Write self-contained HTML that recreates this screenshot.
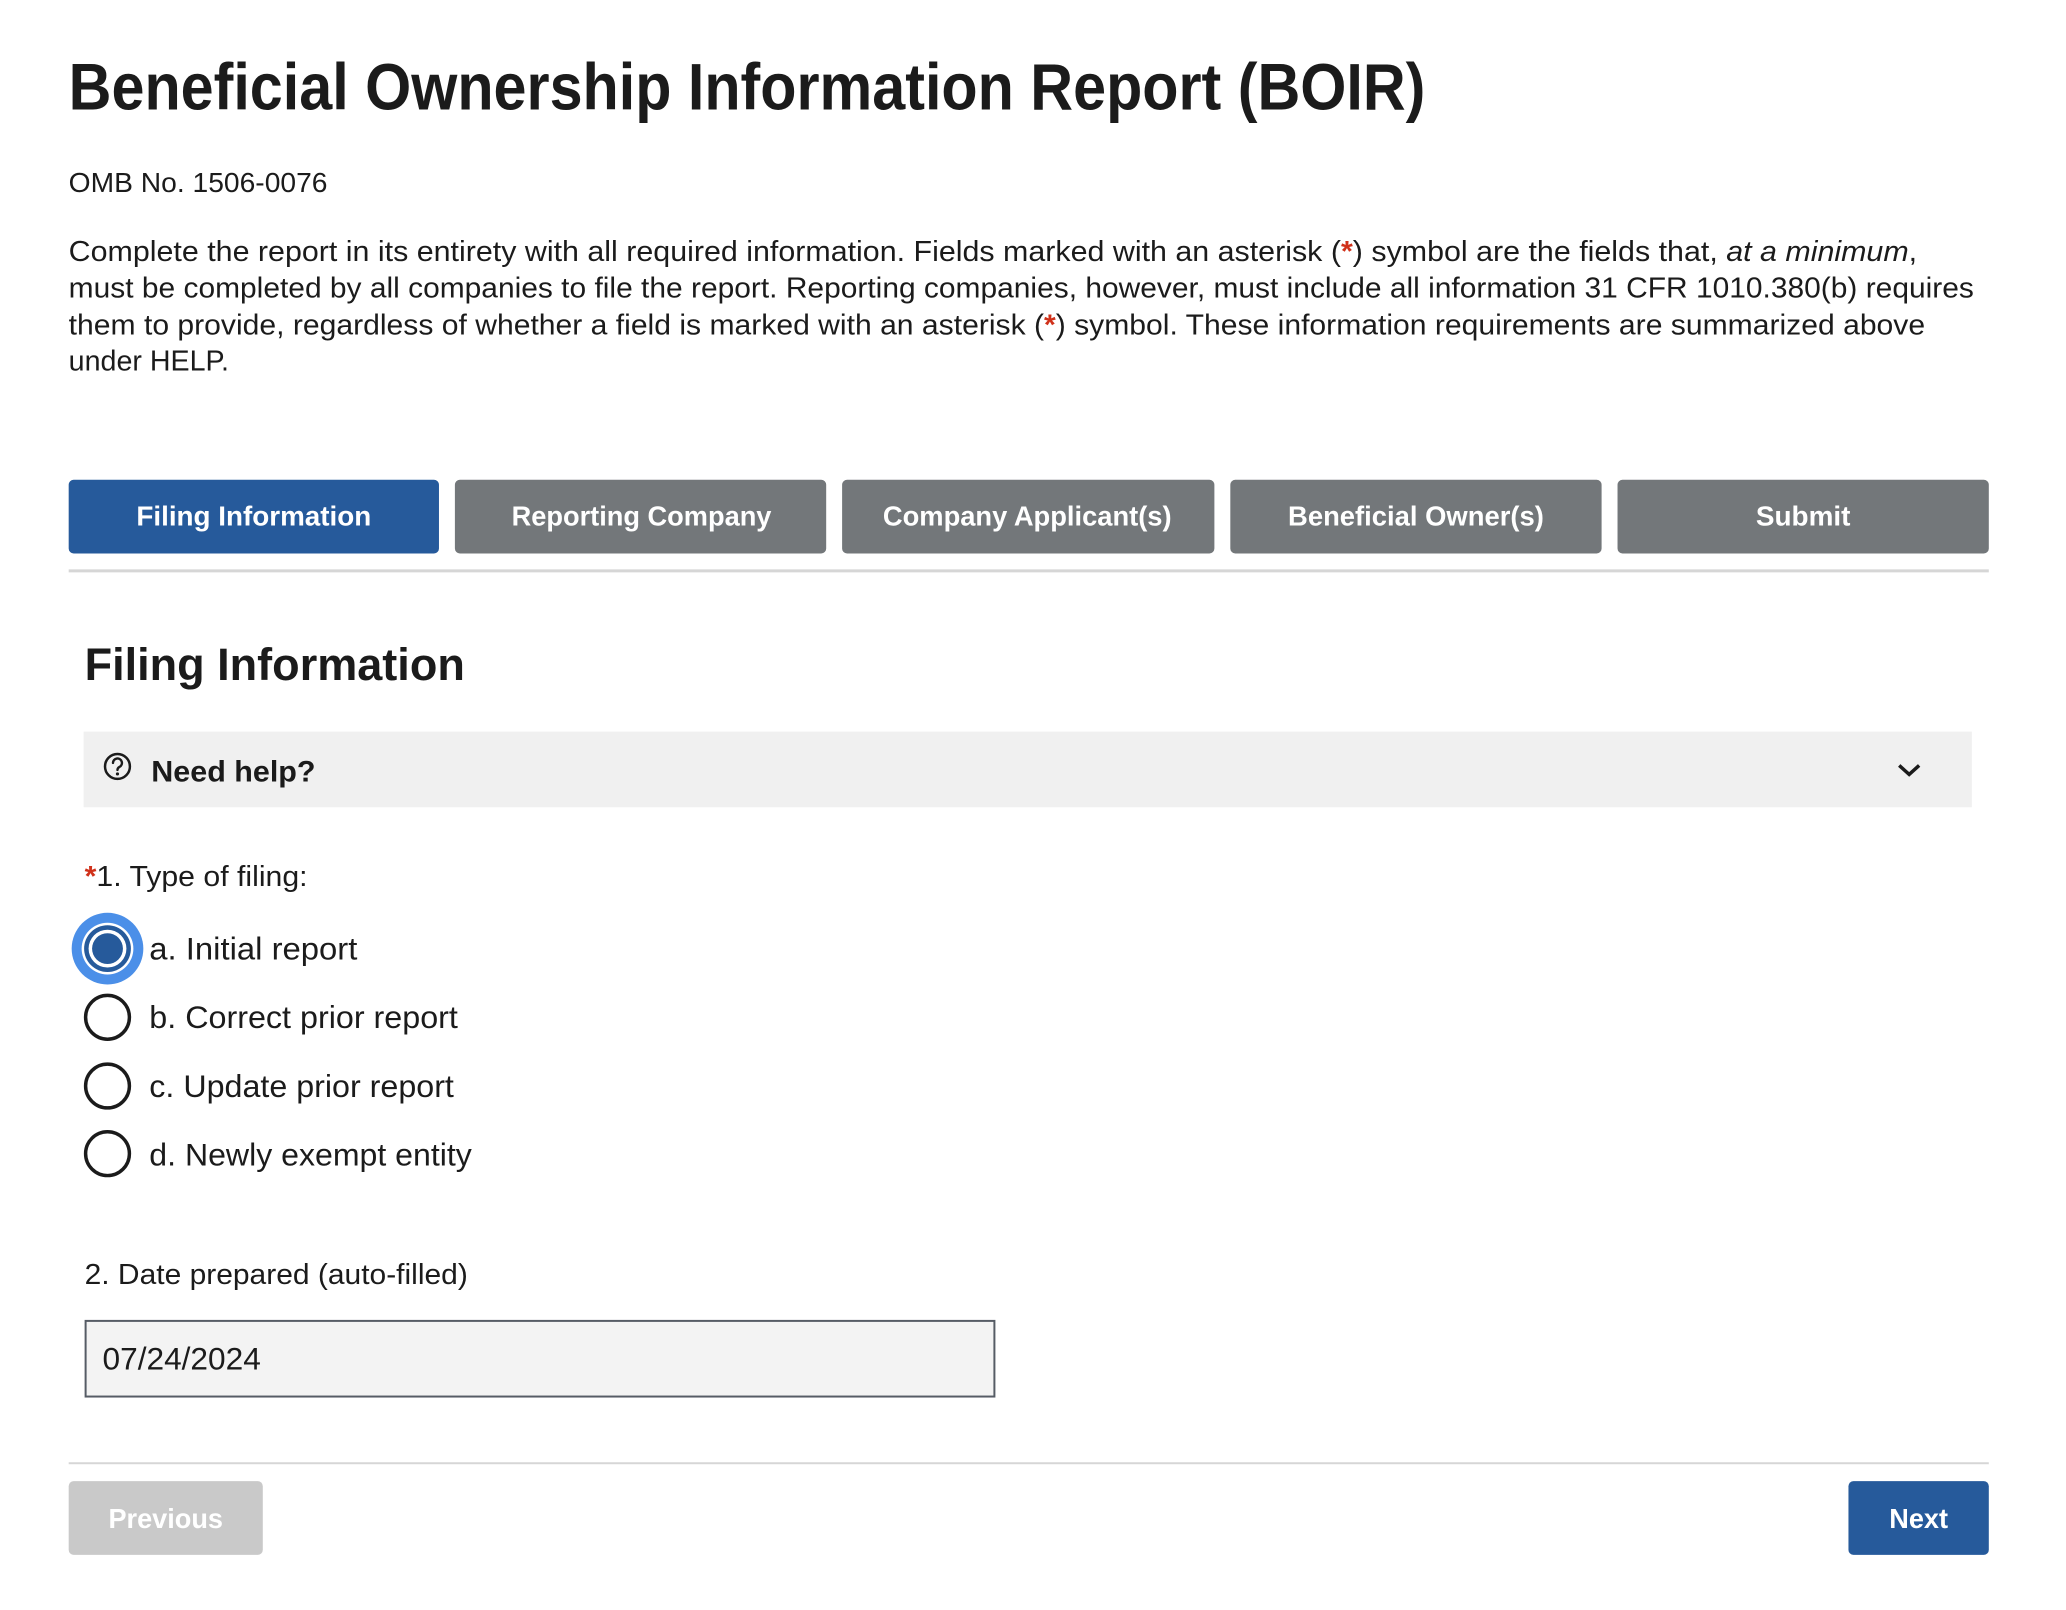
<!DOCTYPE html>
<html><head><meta charset="utf-8"><style>
html,body{margin:0;padding:0;background:#fff;width:2066px;height:1610px;overflow:hidden}
svg{display:block}
text{font-family:"Liberation Sans",Arial,sans-serif;fill:#1b1b1b}
.b{font-weight:bold}
</style></head><body>
<svg width="2066" height="1610" viewBox="0 0 2066 1610" xmlns="http://www.w3.org/2000/svg">
<g transform="scale(0.9954)">
<text class="b" x="69" y="110" font-size="66" textLength="1363" lengthAdjust="spacingAndGlyphs">Beneficial Ownership Information Report (BOIR)</text>
<text x="69" y="193" font-size="28" textLength="260" lengthAdjust="spacingAndGlyphs">OMB No. 1506-0076</text>
<text x="69" y="262" font-size="29" textLength="1857" lengthAdjust="spacingAndGlyphs">Complete the report in its entirety with all required information. Fields marked with an asterisk (<tspan style="fill:#d0311a" font-weight="bold">*</tspan>) symbol are the fields that, <tspan font-style="italic">at a minimum</tspan>,</text>
<text x="69" y="299" font-size="29" textLength="1914" lengthAdjust="spacingAndGlyphs">must be completed by all companies to file the report. Reporting companies, however, must include all information 31 CFR 1010.380(b) requires</text>
<text x="69" y="336" font-size="29" textLength="1865" lengthAdjust="spacingAndGlyphs">them to provide, regardless of whether a field is marked with an asterisk (<tspan style="fill:#d0311a" font-weight="bold">*</tspan>) symbol. These information requirements are summarized above</text>
<text x="69" y="372" font-size="29" textLength="161" lengthAdjust="spacingAndGlyphs">under HELP.</text>

<rect x="69" y="482" width="372" height="74" rx="5" fill="#265a9b"/>
<rect x="457" y="482" width="373" height="74" rx="5" fill="#73777a"/>
<rect x="846" y="482" width="374" height="74" rx="5" fill="#73777a"/>
<rect x="1236" y="482" width="373" height="74" rx="5" fill="#73777a"/>
<rect x="1625" y="482" width="373" height="74" rx="5" fill="#73777a"/>
<text class="b" x="137" y="528" font-size="28" style="fill:#fff" textLength="236" lengthAdjust="spacingAndGlyphs">Filing Information</text>
<text class="b" x="514" y="528" font-size="28" style="fill:#fff" textLength="261" lengthAdjust="spacingAndGlyphs">Reporting Company</text>
<text class="b" x="887" y="528" font-size="28" style="fill:#fff" textLength="290" lengthAdjust="spacingAndGlyphs">Company Applicant(s)</text>
<text class="b" x="1294" y="528" font-size="28" style="fill:#fff" textLength="257" lengthAdjust="spacingAndGlyphs">Beneficial Owner(s)</text>
<text class="b" x="1764" y="528" font-size="28" style="fill:#fff" textLength="95" lengthAdjust="spacingAndGlyphs">Submit</text>
<rect x="69" y="572" width="1929" height="3" fill="#d6d6d6"/>

<text class="b" x="85" y="683" font-size="46" textLength="382" lengthAdjust="spacingAndGlyphs">Filing Information</text>

<rect x="84" y="735" width="1897" height="76" fill="#f0f0f0"/>
<circle cx="118" cy="770" r="12.5" fill="none" stroke="#1b1b1b" stroke-width="2.5"/>
<path d="M113.5 766.5a4.5 4.5 0 1 1 6.5 4c-1.5.8-2 1.6-2 3" fill="none" stroke="#1b1b1b" stroke-width="2.4" stroke-linecap="round"/>
<circle cx="118" cy="777.5" r="1.6" fill="#1b1b1b"/>
<text class="b" x="152" y="785" font-size="30" textLength="165" lengthAdjust="spacingAndGlyphs">Need help?</text>
<path d="M1908 769l10 9 10-9" fill="none" stroke="#1b1b1b" stroke-width="3.5"/>

<text x="85" y="890" font-size="29" textLength="224" lengthAdjust="spacingAndGlyphs"><tspan style="fill:#d0311a" font-weight="bold">*</tspan>1. Type of filing:</text>

<circle cx="108" cy="953" r="36" fill="#4b8fe8"/>
<circle cx="108" cy="953" r="26" fill="#fff"/>
<circle cx="108" cy="953" r="23.5" fill="#265a9b"/>
<circle cx="108" cy="953" r="19" fill="#fff"/>
<circle cx="108" cy="953" r="15.5" fill="#265a9b"/>
<circle cx="108" cy="1022" r="22" fill="none" stroke="#1b1b1b" stroke-width="3.5"/>
<circle cx="108" cy="1091" r="22" fill="none" stroke="#1b1b1b" stroke-width="3.5"/>
<circle cx="108" cy="1159" r="22" fill="none" stroke="#1b1b1b" stroke-width="3.5"/>
<text x="150" y="964" font-size="32" textLength="209" lengthAdjust="spacingAndGlyphs">a. Initial report</text>
<text x="150" y="1033" font-size="32" textLength="310" lengthAdjust="spacingAndGlyphs">b. Correct prior report</text>
<text x="150" y="1102" font-size="32" textLength="306" lengthAdjust="spacingAndGlyphs">c. Update prior report</text>
<text x="150" y="1171" font-size="32" textLength="324" lengthAdjust="spacingAndGlyphs">d. Newly exempt entity</text>

<text x="85" y="1290" font-size="29" textLength="385" lengthAdjust="spacingAndGlyphs">2. Date prepared (auto-filled)</text>
<rect x="86" y="1327" width="913" height="76" fill="#f3f3f3" stroke="#565c65" stroke-width="2"/>
<text x="103" y="1376" font-size="32" textLength="159" lengthAdjust="spacingAndGlyphs">07/24/2024</text>

<rect x="69" y="1469" width="1929" height="2" fill="#d6d6d6"/>
<rect x="69" y="1488" width="195" height="74" rx="5" fill="#c9c9c9"/>
<text class="b" x="109" y="1535" font-size="28" style="fill:#fff" textLength="115" lengthAdjust="spacingAndGlyphs">Previous</text>
<rect x="1857" y="1488" width="141" height="74" rx="5" fill="#265a9b"/>
<text class="b" x="1898" y="1535" font-size="28" style="fill:#fff" textLength="59" lengthAdjust="spacingAndGlyphs">Next</text>
</g>
</svg>
</body></html>
